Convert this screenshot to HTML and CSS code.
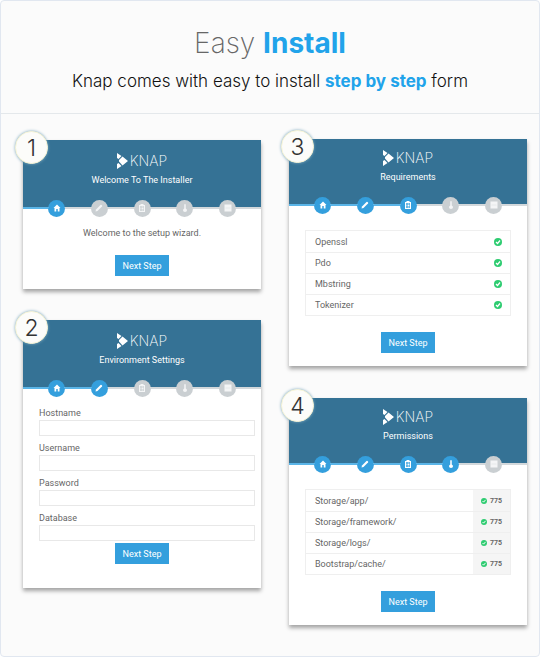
FILE: index.html
```
<!DOCTYPE html>
<html lang="en">
<head>
    <meta charset="UTF-8">
    <meta name="viewport" content="width=device-width, initial-scale=1.0">
    <title>Easy Install</title>
    <link rel="stylesheet" href="styles.css">
</head>
<body>
    <!-- shared icons -->
    <svg class="sprite" aria-hidden="true">
        <symbol id="mark" viewBox="0 0 22 32">
            <path d="M0 0 L9 6 L3 12 L0 10 Z M11 7 L22 16 L11 25 L4 17 L4 14 Z M0 22 L3 20 L9 26 L0 32 Z"/>
        </symbol>
        <symbol id="home" viewBox="0 0 16 16">
            <path d="M8 1 L15 8 H13 V15 H9.500 V10 H6.500 V15 H3 V8 H1 Z"/>
        </symbol>
        <symbol id="pencil" viewBox="0 0 16 16">
            <path d="M1 15 L2 11 L11 2 Q12 1 13 2 L14 3 Q15 4 14 5 L5 14 Z"/>
        </symbol>
        <symbol id="clipboard" viewBox="0 0 16 16">
            <path fill-rule="evenodd" d="M2 2 H5 V0 H11 V2 H14 V16 H2 Z M4 4 V14 H12 V4 Z M5 5 H7 V7 H5 Z M8 5 H11 V7 H8 Z M5 8 H7 V10 H5 Z M8 8 H11 V10 H8 Z M5 11 H7 V13 H5 Z M8 11 H11 V13 H8 Z"/>
        </symbol>
        <symbol id="thermometer" viewBox="0 0 16 16">
            <path d="M6.500 2 Q6.500 0 8 0 T9.500 2 V9 Q12 10 12 12.500 Q12 16 8 16 T4 12.500 Q4 10 6.500 9 Z"/>
        </symbol>
        <symbol id="server" viewBox="0 0 16 16">
            <path d="M1 1 H15 V15 H1 Z"/>
            <path d="M3 8 H13" stroke="#d9dcdd" stroke-width="1"/>
        </symbol>
        <symbol id="check" viewBox="0 0 16 16">
            <circle cx="8" cy="8" r="8" fill="#2ecc71"/>
            <path d="M4 8 L7 11 L12 5" fill="none" stroke="#fff" stroke-width="2.500"/>
        </symbol>
    </svg>

    <div class="panel">
        <div class="intro">
            <h1>Easy <strong>Install</strong></h1>
            <p>Knap comes with easy to install <strong>step by step</strong> form</p>
        </div>

        <div class="columns">
            <div class="column column-left">
                <div class="card">
                    <span class="number">1</span>
                    <div class="card-header">
                        <div class="logo"><svg><use href="#mark"/></svg>KNAP</div>
                        <h2>Welcome To The Installer</h2>
                    </div>
                    <ul class="steps">
                        <li class="line done"></li>
                        <li class="step done"><svg><use href="#home"/></svg></li>
                        <li class="line"></li>
                        <li class="step"><svg><use href="#pencil"/></svg></li>
                        <li class="line"></li>
                        <li class="step"><svg><use href="#clipboard"/></svg></li>
                        <li class="line"></li>
                        <li class="step"><svg><use href="#thermometer"/></svg></li>
                        <li class="line"></li>
                        <li class="step"><svg><use href="#server"/></svg></li>
                        <li class="line"></li>
                    </ul>
                    <div class="card-body">
                        <p class="message">Welcome to the setup wizard.</p>
                        <button class="next">Next Step</button>
                    </div>
                </div>

                <div class="card">
                    <span class="number">2</span>
                    <div class="card-header">
                        <div class="logo"><svg><use href="#mark"/></svg>KNAP</div>
                        <h2>Environment Settings</h2>
                    </div>
                    <ul class="steps">
                        <li class="line done"></li>
                        <li class="step done"><svg><use href="#home"/></svg></li>
                        <li class="line done"></li>
                        <li class="step done"><svg><use href="#pencil"/></svg></li>
                        <li class="line"></li>
                        <li class="step"><svg><use href="#clipboard"/></svg></li>
                        <li class="line"></li>
                        <li class="step"><svg><use href="#thermometer"/></svg></li>
                        <li class="line"></li>
                        <li class="step"><svg><use href="#server"/></svg></li>
                        <li class="line"></li>
                    </ul>
                    <form class="card-body settings">
                        <label for="hostname">Hostname</label>
                        <input type="text" id="hostname">
                        <label for="username">Username</label>
                        <input type="text" id="username">
                        <label for="password">Password</label>
                        <input type="password" id="password">
                        <label for="database">Database</label>
                        <input type="text" id="database">
                        <button type="button" class="next">Next Step</button>
                    </form>
                </div>
            </div>

            <div class="column column-right">
                <div class="card">
                    <span class="number">3</span>
                    <div class="card-header">
                        <div class="logo"><svg><use href="#mark"/></svg>KNAP</div>
                        <h2>Requirements</h2>
                    </div>
                    <ul class="steps">
                        <li class="line done"></li>
                        <li class="step done"><svg><use href="#home"/></svg></li>
                        <li class="line done"></li>
                        <li class="step done"><svg><use href="#pencil"/></svg></li>
                        <li class="line done"></li>
                        <li class="step done"><svg><use href="#clipboard"/></svg></li>
                        <li class="line"></li>
                        <li class="step"><svg><use href="#thermometer"/></svg></li>
                        <li class="line"></li>
                        <li class="step"><svg><use href="#server"/></svg></li>
                        <li class="line"></li>
                    </ul>
                    <div class="card-body">
                        <ul class="list">
                            <li>Openssl <svg class="check"><use href="#check"/></svg></li>
                            <li>Pdo <svg class="check"><use href="#check"/></svg></li>
                            <li>Mbstring <svg class="check"><use href="#check"/></svg></li>
                            <li>Tokenizer <svg class="check"><use href="#check"/></svg></li>
                        </ul>
                        <button class="next">Next Step</button>
                    </div>
                </div>

                <div class="card">
                    <span class="number">4</span>
                    <div class="card-header">
                        <div class="logo"><svg><use href="#mark"/></svg>KNAP</div>
                        <h2>Permissions</h2>
                    </div>
                    <ul class="steps">
                        <li class="line done"></li>
                        <li class="step done"><svg><use href="#home"/></svg></li>
                        <li class="line done"></li>
                        <li class="step done"><svg><use href="#pencil"/></svg></li>
                        <li class="line done"></li>
                        <li class="step done"><svg><use href="#clipboard"/></svg></li>
                        <li class="line done"></li>
                        <li class="step done"><svg><use href="#thermometer"/></svg></li>
                        <li class="line"></li>
                        <li class="step"><svg><use href="#server"/></svg></li>
                        <li class="line"></li>
                    </ul>
                    <div class="card-body">
                        <ul class="list">
                            <li>Storage/app/ <span class="mode"><svg><use href="#check"/></svg>775</span></li>
                            <li>Storage/framework/ <span class="mode"><svg><use href="#check"/></svg>775</span></li>
                            <li>Storage/logs/ <span class="mode"><svg><use href="#check"/></svg>775</span></li>
                            <li>Bootstrap/cache/ <span class="mode"><svg><use href="#check"/></svg>775</span></li>
                        </ul>
                        <button class="next">Next Step</button>
                    </div>
                </div>
            </div>
        </div>
    </div>
</body>
</html>
```

FILE: styles.css
```
* {
    box-sizing: border-box;
}
body {
    margin: 0;
    background-color: #fff;
    color: #666;
    font-family: Roboto, "Liberation Sans", sans-serif;
    font-size: 9px;
    line-height: 12px;
}
h1, h2, p, ul {
    margin: 0;
    padding: 0;
    font-weight: 400;
}
ul {
    list-style: none;
}
svg {
    display: block;
    fill: currentColor;
}
.sprite {
    position: absolute;
    width: 0;
    height: 0;
}
.panel {
    min-height: 100vh;
    background-color: #fbfbfb;
    border: 1px solid #e1e7f0;
    border-radius: 4px;
}

/* intro */
.intro {
    padding: 22px 10px 20px;
    border-bottom: 1px solid #e4e8eb;
    font-family: Inter, "Open Sans", sans-serif;
    text-align: center;
    color: #111;
}
.intro h1 {
    font-size: 28px;
    line-height: 40px;
    font-weight: 200;
    color: #666;
}
.intro p {
    margin-top: 6px;
    font-size: 17px;
    line-height: 24px;
    font-weight: 300;
}
.intro strong {
    font-weight: 700;
    color: #21a3ea;
}

/* cards */
.columns {
    display: grid;
    grid-template-columns: 1fr 1fr;
    column-gap: 28px;
    padding: 0 12px 24px 22px;
}
.column {
    display: flex;
    flex-direction: column;
}
.column-left {
    padding-top: 26px;
    gap: 31px;
}
.column-right {
    padding-top: 25px;
    gap: 32px;
}
.card {
    position: relative;
    background-color: #fff;
    box-shadow: 0 3px 4px rgba(0, 0, 0, 0.35);
}
.number {
    position: absolute;
    top: -9px;
    left: -8px;
    width: 33px;
    height: 33px;
    border-radius: 50%;
    background-color: #fcfcfa;
    border: 1px solid #f8f5d6;
    box-shadow: 0 0 3px #7fa9bf;
    font-family: Inter, "Open Sans", sans-serif;
    font-size: 23px;
    line-height: 32px;
    font-weight: 300;
    text-align: center;
    color: #333;
}
.card-header {
    height: 67px;
    padding-top: 13px;
    background-color: #357295;
    color: #fff;
    text-align: center;
}
.column-right .card-header {
    height: 65px;
    padding-top: 11px;
}
.logo {
    display: flex;
    justify-content: center;
    align-items: center;
    gap: 2px;
    font-family: Inter, "Open Sans", sans-serif;
    font-size: 14px;
    line-height: 16px;
    font-weight: 200;
}
.logo svg {
    width: 11px;
    height: 16px;
}
.card-header h2 {
    margin-top: 5px;
    font-size: 9px;
}

/* progress */
.steps {
    display: flex;
    align-items: center;
    height: 2px;
}
.line {
    flex: 1;
    height: 2px;
    background-color: #d3d8db;
}
.line:first-child, .line:last-child {
    flex: none;
    width: 25px;
}
.line.done {
    background-color: #5ab5e8;
}
.step {
    display: flex;
    justify-content: center;
    align-items: center;
    width: 17px;
    height: 17px;
    border-radius: 50%;
    background-color: #cacfd2;
    color: #f4f5f6;
}
.step.done {
    background-color: #349fdd;
    color: #fff;
}
.step svg {
    width: 8px;
    height: 8px;
}

.card-body {
    padding: 18px 16px 13px;
}
.column-right .card-body {
    padding-top: 24px;
}
.message {
    margin-bottom: 16px;
    text-align: center;
}
.next {
    display: block;
    margin: 0 auto;
    padding: 0 8px;
    height: 21px;
    border: 0;
    background-color: #349fdd;
    color: #fff;
    font-family: inherit;
    font-size: 9px;
}

/* form */
.settings {
    padding: 12px 16px 24px;
}
.settings label {
    display: block;
    padding-top: 6px;
}
.settings input {
    display: block;
    width: calc(100% + 10px);
    height: 16px;
    margin-top: 1px;
    padding: 0 4px;
    border: 1px solid #e8e8e8;
    background-color: #fff;
    font-size: 9px;
}
.settings .next {
    margin-top: 2px;
}

/* lists */
.list {
    margin-bottom: 16px;
    border: 1px solid #efefef;
}
.list li {
    display: flex;
    justify-content: space-between;
    align-items: center;
    height: 21px;
    padding-left: 9px;
}
.list li + li {
    border-top: 1px solid #efefef;
}
.check {
    width: 8px;
    height: 8px;
    margin-right: 8px;
}
.mode {
    display: flex;
    align-items: center;
    gap: 3px;
    height: 100%;
    padding: 0 8px;
    background-color: #f5f5f5;
    font-size: 7px;
    font-weight: 700;
}
.mode svg {
    width: 6px;
    height: 6px;
}
```
